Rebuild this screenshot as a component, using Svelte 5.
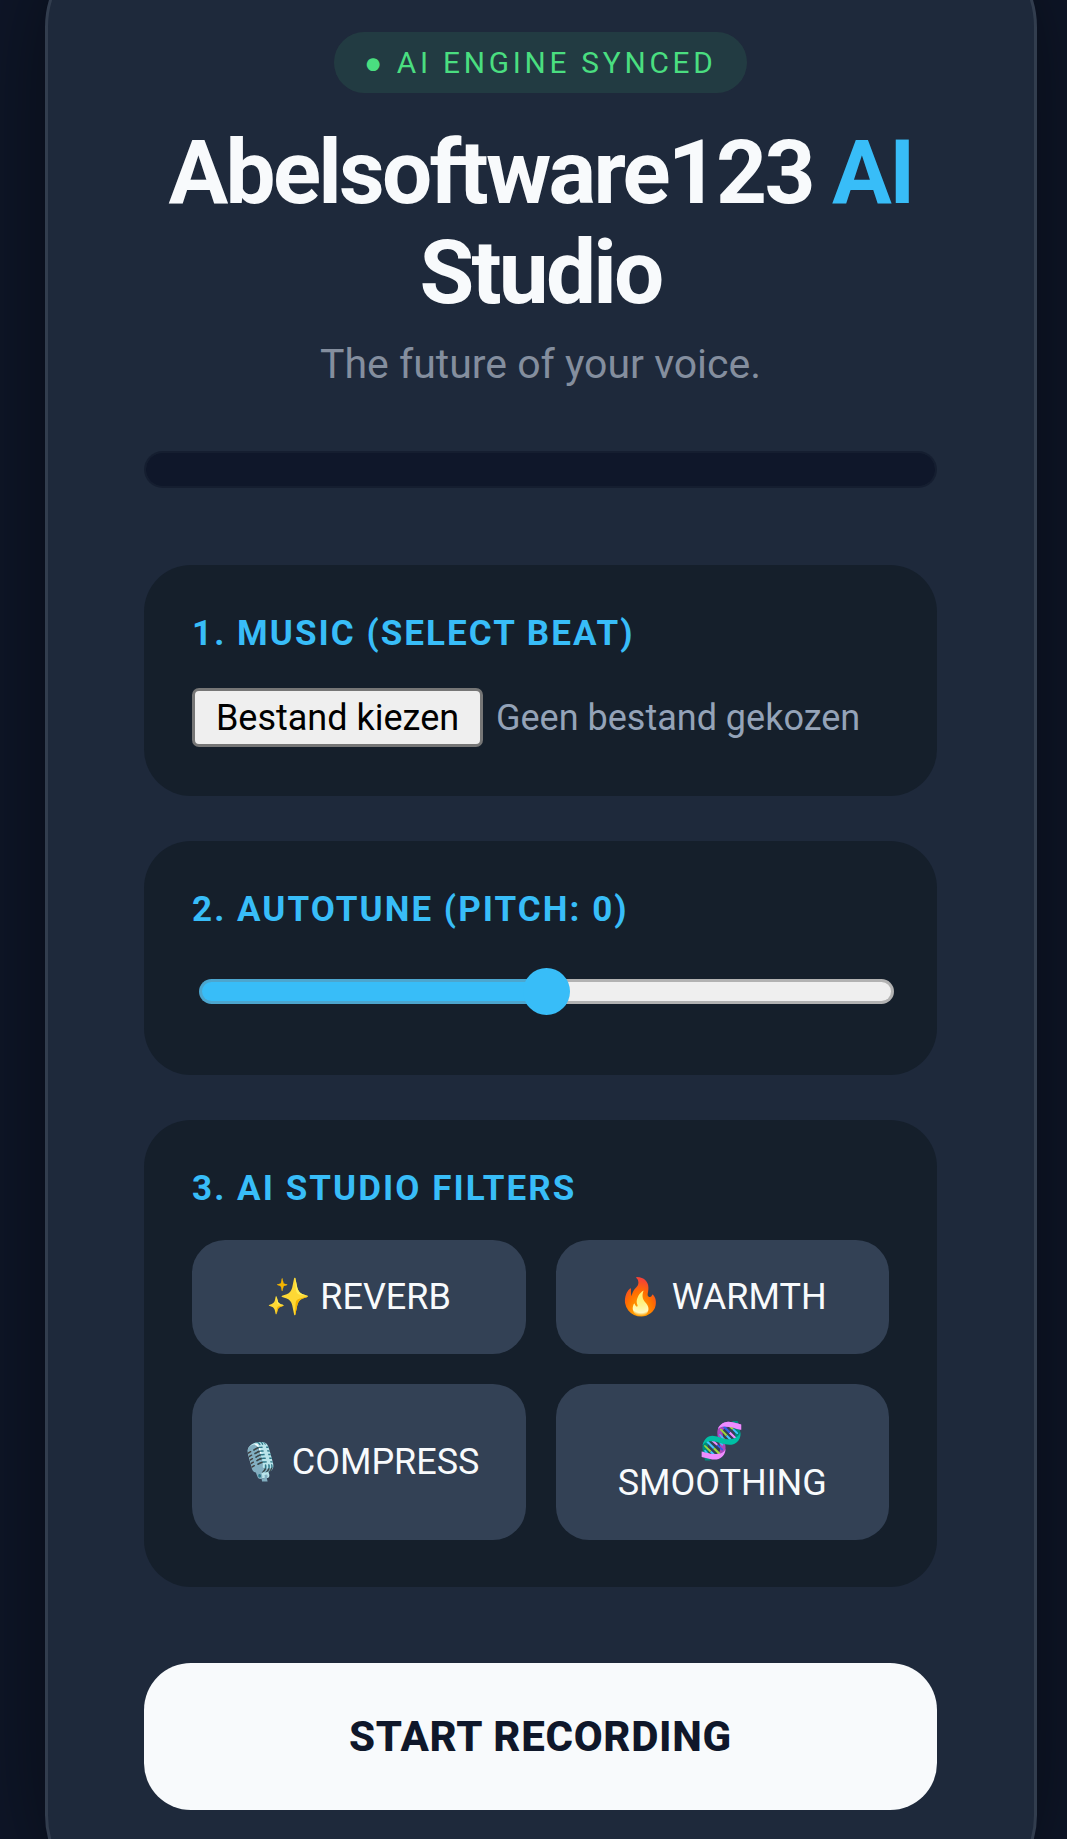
<script>
  const filters = [
    { icon: '✨', name: 'REVERB' },
    { icon: '🔥', name: 'WARMTH' },
    { icon: '🎙️', name: 'COMPRESS' },
    { icon: '🧬', name: 'SMOOTHING' }
  ];
  let pitch = $state(0);
</script>

<main class="page">
  <div class="panel">
    <header class="head">
      <div class="badge">● AI ENGINE SYNCED</div>
      <h1>Abelsoftware123 <span>AI</span> Studio</h1>
      <p class="sub">The future of your voice.</p>
    </header>

    <div class="progress"></div>

    <section class="card first">
      <h2>1. MUSIC (SELECT BEAT)</h2>
      <div class="file">
        <button class="choose" type="button">Bestand kiezen</button>
        <span class="none">Geen bestand gekozen</span>
      </div>
    </section>

    <section class="card second">
      <h2>2. AUTOTUNE (PITCH: {pitch})</h2>
      <div class="slider">
        <div class="fill"></div>
        <div class="rest"></div>
        <div class="thumb"></div>
      </div>
    </section>

    <section class="card third">
      <h2>3. AI STUDIO FILTERS</h2>
      <div class="grid">
        {#each filters as f}
          <button class="filter" type="button">{f.icon} {f.name}</button>
        {/each}
      </div>
    </section>

    <button class="start" type="button">START RECORDING</button>
  </div>
</main>

<style>
  :global(body) {
    margin: 0;
    background: #0f172a;
    overflow: hidden;
  }
  .page {
    height: 1839px;
    overflow: hidden;
    font-family: Roboto, "Noto Sans", sans-serif;
  }
  .panel {
    box-sizing: border-box;
    width: 992px;
    margin: -67px 0 0 45px;
    padding: 96px 97px 96px 96px;
    background: #1e293b;
    border: 3px solid #323d4e;
    border-radius: 94px;
    box-shadow: 0 0 120px rgba(0, 0, 0, 0.55);
  }
  .head {
    display: flex;
    flex-direction: column;
    align-items: center;
    text-align: center;
  }
  .badge {
    box-sizing: border-box;
    height: 61px;
    padding: 0 30px 0 29.5px;
    line-height: 61px;
    border-radius: 31px;
    background: rgba(74, 222, 128, 0.1);
    color: #4ade80;
    font-size: 29.8px;
    letter-spacing: 3.75px;
  }
  h1 {
    margin: 30px 0 0;
    font-size: 89px;
    line-height: 100px;
    font-weight: 700;
    color: #f8fafc;
    letter-spacing: -2.75px;
  }
  h1 span {
    color: #38bdf8;
  }
  .sub {
    margin: 18px 0 0;
    font-size: 41px;
    line-height: 47px;
    color: #848e9e;
  }
  .progress {
    box-sizing: border-box;
    height: 37px;
    margin-top: 63px;
    border: 2px solid rgba(15, 23, 42, 0.6);
    border-radius: 19px;
    background: #0f172a;
    background-clip: padding-box;
  }
  .card {
    box-sizing: border-box;
    padding: 48px 48px 47px;
    border-radius: 47px;
    background: #151f2b;
    margin-top: 45px;
  }
  .first {
    margin-top: 77px;
    height: 231px;
  }
  .second {
    height: 234px;
  }
  .third {
    height: 467px;
  }
  h2 {
    margin: 0;
    font-size: 35px;
    line-height: 41px;
    font-weight: 700;
    letter-spacing: 2.05px;
    color: #38bdf8;
  }
  .file {
    display: flex;
    align-items: center;
    gap: 13px;
    margin-top: 34px;
  }
  .choose {
    box-sizing: border-box;
    width: 291px;
    height: 59px;
    padding: 0;
    background: #efefef;
    border: 3px solid #767676;
    border-radius: 7px;
    color: #000;
    font: 36px/42px Roboto, sans-serif;
  }
  .none {
    font-size: 36px;
    line-height: 42px;
    color: #94a3b8;
  }
  .slider {
    position: relative;
    display: flex;
    height: 25px;
    margin: 49px 0 0 7px;
    width: 695px;
  }
  .fill,
  .rest {
    box-sizing: border-box;
    flex: 1;
    border: 3px solid;
  }
  .fill {
    background: #38bdf8;
    border-color: #4ca6cf;
    border-right: 0;
    border-radius: 13px 0 0 13px;
  }
  .rest {
    background: #efefef;
    border-color: #b2b2b2;
    border-left: 0;
    border-radius: 0 13px 13px 0;
  }
  .thumb {
    position: absolute;
    left: 50%;
    top: 50%;
    width: 47px;
    height: 47px;
    margin: -23.5px 0 0 -23.5px;
    border-radius: 50%;
    background: #38bdf8;
  }
  .grid {
    display: grid;
    grid-template-columns: 1fr 1fr;
    gap: 30px;
    margin-top: 31px;
  }
  .filter {
    padding: 36px 40px;
    border: 0;
    border-radius: 33px;
    background: #334155;
    color: #f8fafc;
    font: 36px/42px Roboto, "Noto Color Emoji", sans-serif;
  }
  .start {
    display: block;
    width: 100%;
    height: 147px;
    margin-top: 76px;
    padding: 0;
    border: 0;
    border-radius: 47px;
    background: #f8fafc;
    color: #0f172a;
    font: 800 42px/49px Roboto, sans-serif;
    letter-spacing: 0.7px;
  }
</style>
